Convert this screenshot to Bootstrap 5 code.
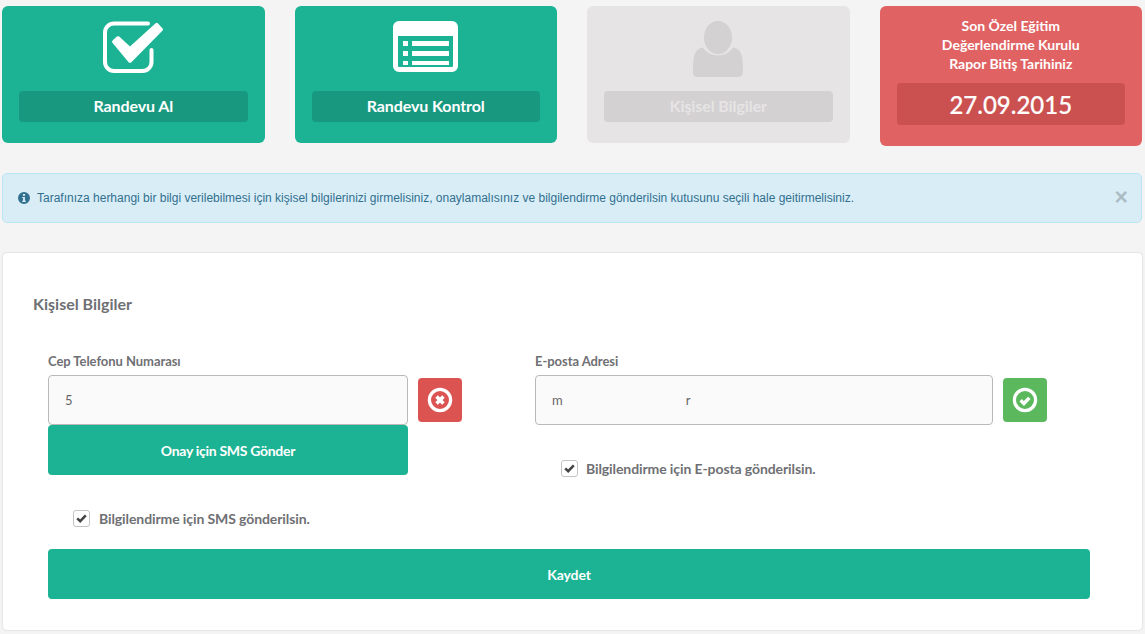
<!DOCTYPE html>
<html lang="tr">
<head>
<meta charset="utf-8">
<title>Kişisel Bilgiler</title>
<link rel="stylesheet" href="https://cdn.jsdelivr.net/npm/bootstrap@5.3.0/dist/css/bootstrap.min.css">
<style>
html,body{height:634px;overflow:hidden}
body{background:#f4f4f4;font-family:"Lato","Liberation Sans",sans-serif;color:#6f7074;padding:6px 3px 0 2px}
.tiles{display:grid;grid-template-columns:repeat(4,1fr);gap:30px;align-items:start}
.tile{height:137px;border:0;border-radius:6px;padding:15px 17px 0;align-items:center;color:#fff;background:#1bb394}
.tile-red{height:140px;background:#e06263;padding-top:10px}
.tile-off{background:#e6e4e5;color:#e6e4e5}
.tile-ico{height:56px;display:flex;justify-content:center;align-items:flex-start;flex:none}
.tile-strip{width:100%;height:31px;margin-top:14px;border-radius:4px;background:#18997f;font-size:16px;line-height:30px;font-weight:700;text-align:center;letter-spacing:-.1px}
.tile-off .tile-strip{background:#d3d1d2}
.tile-title{font-size:14px;line-height:19px;font-weight:700;text-align:center}
.tile-date{width:100%;height:42px;margin-top:10px;border-radius:4px;background:#cb5050;font-size:24px;line-height:43px;font-weight:500;text-align:center;-webkit-text-stroke:.2px #fff}
.notice{margin:27px 0 30px;height:50px;padding:0 15px;border:1px solid #bae6f2;border-radius:5px;background:#d9edf7;color:#31708f;font:12px/1 "Liberation Sans",sans-serif;gap:7px}
.notice .shut{position:absolute;right:13px;top:13px;border:0;background:none;padding:0;font:700 23px/21px "Liberation Sans",sans-serif;color:#000;opacity:.2}
.sheet{margin-left:1px;height:377px;border:0;border-radius:4px;box-shadow:0 0 2px rgba(0,0,0,.2);padding:41px 30px 0;background:#fff}
.sheet-title{font-size:16px;line-height:20px;font-weight:700;color:#6f7074;margin:0 0 39px}
.fields{display:grid;grid-template-columns:487px 1fr;padding-left:15px}
.fld-label{font-size:13px;line-height:16px;font-weight:700;margin:0 0 6px;display:block;letter-spacing:-.05px}
.fld-wrap{display:flex;gap:10px;align-items:center}
.fld-input{height:50px;border:1px solid #b9b9b9;border-radius:4px;background:#fafafa;padding:0 16px;font-size:13px;color:#666;box-shadow:none}
.w-phone{width:360px}
.w-mail{width:458px}
.state{width:44px;height:44px;border-radius:4px;border:0;padding:0;display:flex;align-items:center;justify-content:center;flex:none}
.state-bad{background:#dc5451}
.state-ok{background:#5cb85c}
.go{background:#1bb394;border:0;border-radius:4px;color:#fff;font-size:14px;font-weight:700;height:50px;padding:0;display:block;letter-spacing:-.3px}
.go:hover{background:#1bb394;color:#fff}
.opt{display:flex;align-items:center;font-size:14px;font-weight:700;line-height:16px;margin:0;letter-spacing:-.1px}
.opt .tick{width:17px;height:17px;margin:0;border:1px solid #c4c4c4;border-radius:3px;background:#fff url("data:image/svg+xml,%3Csvg xmlns='http://www.w3.org/2000/svg' viewBox='0 0 17 17'%3E%3Cpath d='M4.200 8.300 7.200 11.200 12.800 5.400' fill='none' stroke='%23444' stroke-width='2.500'/%3E%3C/svg%3E") center/17px no-repeat;box-shadow:none}
.opt-mail{margin:35px 0 0 26px;gap:8px}
.opt-sms{margin:35px 0 0 25px;gap:9px}
.save{width:1042px;margin:22px 0 0 15px;letter-spacing:-.1px}
</style>
</head>
<body>
<div class="tiles">
  <div class="card tile">
    <div class="tile-ico"><svg width="60" height="52" viewBox="0 0 60 52" aria-hidden="true"><path d="M45 2.500H11a9 9 0 0 0-9 9V41a9 9 0 0 0 9 9h28.500a9 9 0 0 0 9-9V29" fill="none" stroke="#fff" stroke-width="4" stroke-linecap="round"/><path d="M9.600 19.400 13.800 15.600q1.200-.9 2.400 0L27 25.500 52.600 2.200q1.200-.9 2.200 0L59.600 7.600q.8 1 0 2L28.400 41.200q-1.400 1.200-2.800 0L9.600 22q-1-1.300 0-2.600z" fill="#fff"/></svg></div>
    <div class="tile-strip">Randevu Al</div>
  </div>
  <div class="card tile">
    <div class="tile-ico"><svg width="65" height="51" viewBox="0 0 65 51" aria-hidden="true"><path fill-rule="evenodd" fill="#fff" d="M6 0h53a6 6 0 0 1 6 6v39a6 6 0 0 1-6 6H6a6 6 0 0 1-6-6V6a6 6 0 0 1 6-6zM5 15v30a1 1 0 0 0 1 1h53a1 1 0 0 0 1-1V15zM10 20h5v5h-5zm9 0h37v5H19zM10 30h5v5h-5zm9 0h37v5H19zM10 40h5v4h-5zm9 0h37v4H19z"/></svg></div>
    <div class="tile-strip">Randevu Kontrol</div>
  </div>
  <div class="card tile tile-off">
    <div class="tile-ico"><svg width="50" height="56" viewBox="0 0 50 56" aria-hidden="true"><ellipse cx="25" cy="16.500" rx="14" ry="16.500" fill="#d3d1d2"/><path d="M10 26.500c3 5 9 8 15 8s12-3 15-8c6 1 9 5 9.500 13 .4 5 .4 8 .4 12 0 3-2 4.500-5 4.500H5c-3 0-5-1.500-5-4.500 0-4 0-7 .4-12C1 31.500 4 27.500 10 26.500z" fill="#d3d1d2"/></svg></div>
    <div class="tile-strip">Kişisel Bilgiler</div>
  </div>
  <div class="card tile tile-red">
    <div class="tile-title">Son Özel Eğitim<br>Değerlendirme Kurulu<br>Rapor Bitiş Tarihiniz</div>
    <div class="tile-date">27.09.2015</div>
  </div>
</div>

<div class="alert alert-info notice position-relative d-flex align-items-center" role="alert">
  <svg width="12" height="12" viewBox="0 0 13 13" aria-hidden="true"><path fill="#31708f" fill-rule="evenodd" d="M6.500 0a6.500 6.500 0 1 1 0 13 6.500 6.500 0 0 1 0-13zM5.300 2.200v1.900h2.400V2.200zM4.600 5.400v1.200h.9v3H4.600v1.200h3.800V9.600h-.9V5.400z"/></svg>
  <span>Tarafınıza herhangi bir bilgi verilebilmesi için kişisel bilgilerinizi girmelisiniz, onaylamalısınız ve bilgilendirme gönderilsin kutusunu seçili hale geitirmelisiniz.</span>
  <button type="button" class="shut" aria-label="Kapat">×</button>
</div>

<div class="card sheet">
  <h5 class="sheet-title">Kişisel Bilgiler</h5>
  <div class="fields">
    <div>
      <label class="fld-label">Cep Telefonu Numarası</label>
      <div class="fld-wrap">
        <input class="form-control fld-input w-phone" value="5">
        <span class="state state-bad"><svg width="26" height="26" viewBox="0 0 24 24" aria-hidden="true"><circle cx="12" cy="12" r="9.800" fill="none" stroke="#fff" stroke-width="3"/><path d="M8.800 8.800l6.400 6.400m0-6.400l-6.400 6.400" stroke="#fff" stroke-width="3.400"/></svg></span>
      </div>
      <button type="button" class="btn go w-phone">Onay için SMS Gönder</button>
      <label class="opt opt-sms"><input class="form-check-input tick" type="checkbox" checked>Bilgilendirme için SMS gönderilsin.</label>
    </div>
    <div>
      <label class="fld-label">E-posta Adresi</label>
      <div class="fld-wrap">
        <input class="form-control fld-input w-mail" value="m                                     r">
        <span class="state state-ok"><svg width="26" height="26" viewBox="0 0 24 24" aria-hidden="true"><circle cx="12" cy="12" r="9.800" fill="none" stroke="#fff" stroke-width="3"/><path d="M8 12.300l3 2.900 5-5.200" fill="none" stroke="#fff" stroke-width="3.200"/></svg></span>
      </div>
      <label class="opt opt-mail"><input class="form-check-input tick" type="checkbox" checked>Bilgilendirme için E-posta gönderilsin.</label>
    </div>
  </div>
  <button type="button" class="btn go save">Kaydet</button>
</div>
<script src="https://cdn.jsdelivr.net/npm/bootstrap@5.3.0/dist/js/bootstrap.bundle.min.js"></script>
</body>
</html>
